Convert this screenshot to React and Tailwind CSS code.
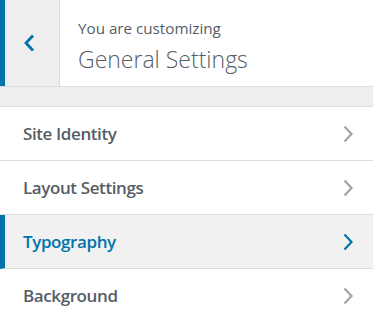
import React from "react";

const items = [
  { label: "Site Identity" },
  { label: "Layout Settings" },
  { label: "Typography", active: true },
  { label: "Background" },
];

function Chevron({ color }) {
  return (
    <svg width="12" height="18" viewBox="0 0 12 18" className="shrink-0">
      <path d="M2.5 1.5 L9.5 9 L2.5 16.5" fill="none" stroke={color} strokeWidth="2.2" strokeLinecap="butt" strokeLinejoin="miter" />
    </svg>
  );
}

export default function App() {
  return (
    <div
      className="w-[373px] h-[322px] overflow-hidden bg-[#eeeeee]"
      style={{ fontFamily: '"Open Sans", "Noto Sans", sans-serif' }}
    >
      <div className="flex h-[87px] bg-white border-b border-[#dddddd]">
        <div className="w-[60px] h-full flex items-center justify-center bg-[#eeeeee] border-l-[5px] border-[#0073aa] border-r border-r-[#dddddd]">
          <svg width="14" height="18" viewBox="0 0 14 18" className="ml-[-6px] mt-[-1px]">
            <path d="M11 1.5 L4 9 L11 16.5" fill="none" stroke="#0073aa" strokeWidth="2.8" />
          </svg>
        </div>
        <div className="flex flex-col pl-[18px] pt-[17px]">
          <span className="text-[15.2px] leading-[22px] text-[#555d66]">You are customizing</span>
          <span className="text-[23px] leading-[30px] font-light text-[#555d66] mt-[5px]">General Settings</span>
        </div>
      </div>
      <div className="h-[19px]" />
      <div className="border-t border-[#dddddd]">
        {items.map((it) => (
          <div
            key={it.label}
            className={
              "h-[54px] flex items-center justify-between pr-[19px] border-b border-[#dddddd] " +
              (it.active
                ? "bg-[#f1f1f1] border-l-[5px] border-l-[#0073aa] pl-[18px]"
                : "bg-white pl-[23px]")
            }
          >
            <span
              className={
                "text-[17px] font-semibold tracking-[-0.4px] " +
                (it.active ? "text-[#0073aa]" : "text-[#555d66]")
              }
            >
              {it.label}
            </span>
            <Chevron color={it.active ? "#0073aa" : "#a0a5aa"} />
          </div>
        ))}
      </div>
    </div>
  );
}
